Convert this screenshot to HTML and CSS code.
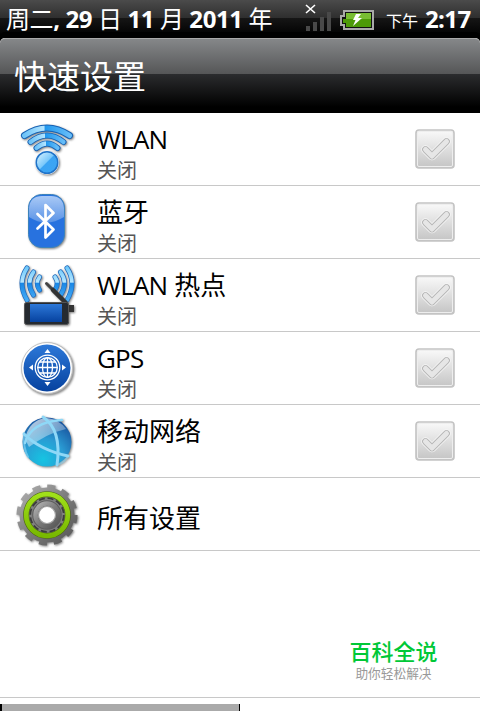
FILE: index.html
```
<!DOCTYPE html>
<html lang="zh-CN">
<head>
<meta charset="UTF-8">
<meta name="viewport" content="width=device-width, initial-scale=1.0">
<title>快速设置</title>
<link rel="stylesheet" href="styles.css">
</head>
<body>
<svg class="defs" width="0" height="0">
    <defs>
        <linearGradient id="check" x1="0" y1="0" x2="0" y2="1">
            <stop offset="0" stop-color="#fafafa"/>
            <stop offset="1" stop-color="#c4c4c4"/>
        </linearGradient>
        <linearGradient id="wave" x1="0" y1="0" x2="1" y2="0">
            <stop offset="0" stop-color="#6fc4f8"/>
            <stop offset=".44" stop-color="#b4e5ff"/>
            <stop offset=".45" stop-color="#1f97ee"/>
            <stop offset="1" stop-color="#66bdf8"/>
        </linearGradient>
        <linearGradient id="antenna" gradientUnits="userSpaceOnUse" x1="0" y1="6" x2="0" y2="42">
            <stop offset="0" stop-color="#64c4fa"/>
            <stop offset=".48" stop-color="#b6e7ff"/>
            <stop offset=".5" stop-color="#1987e6"/>
            <stop offset="1" stop-color="#49adf5"/>
        </linearGradient>
        <linearGradient id="ball" x1="0" y1="0" x2="1" y2="1">
            <stop offset="0" stop-color="#e2f6ff"/>
            <stop offset=".48" stop-color="#79c8fb"/>
            <stop offset=".5" stop-color="#3ba4f3"/>
            <stop offset="1" stop-color="#3da6f5"/>
        </linearGradient>
        <linearGradient id="blue" x1="0" y1="0" x2="0" y2="1">
            <stop offset="0" stop-color="#2d78d8"/>
            <stop offset="1" stop-color="#06429f"/>
        </linearGradient>
        <linearGradient id="gloss" x1="0" y1="0" x2="0" y2="1">
            <stop offset="0" stop-color="#a9c9f6"/>
            <stop offset="1" stop-color="#5a93e6"/>
        </linearGradient>
        <radialGradient id="globe" cx=".42" cy=".85" r=".85">
            <stop offset="0" stop-color="#16c4e2"/>
            <stop offset=".5" stop-color="#2a9bd3"/>
            <stop offset="1" stop-color="#19539e"/>
        </radialGradient>
        <linearGradient id="shine" x1="0" y1="0" x2="1" y2="1">
            <stop offset="0" stop-color="#fff" stop-opacity=".75"/>
            <stop offset="1" stop-color="#fff" stop-opacity=".1"/>
        </linearGradient>
        <linearGradient id="metal" x1="0" y1="0" x2="1" y2="1">
            <stop offset="0" stop-color="#b2b2b2"/>
            <stop offset=".5" stop-color="#7c7c7c"/>
            <stop offset="1" stop-color="#555"/>
        </linearGradient>
        <linearGradient id="lime" x1="0" y1="0" x2="0" y2="1">
            <stop offset="0" stop-color="#a0e01a"/>
            <stop offset="1" stop-color="#78b800"/>
        </linearGradient>
        <symbol id="checkbox" viewBox="0 0 40 40">
            <rect x="1" y="1" width="38" height="38" rx="3" fill="url(#check)" stroke="#c3c3c3" stroke-width="1.600"/>
            <rect x="2.500" y="2.500" width="35" height="35" rx="1.500" fill="none" stroke="#eee"/>
            <path d="M10.500 20.500 17 27 31.500 12.500" fill="none" stroke="#f6f6f6" stroke-width="8.500" stroke-linecap="round" stroke-linejoin="round"/>
            <path d="M10.500 20.500 17 27 31.500 12.500" fill="none" stroke="#b5b5b5" stroke-width="6.800" stroke-linecap="round" stroke-linejoin="round"/>
            <path d="M10.500 20.500 17 27 31.500 12.500" fill="none" stroke="#e6e6e6" stroke-width="5" stroke-linecap="round" stroke-linejoin="round"/>
        </symbol>
    </defs>
</svg>

<div class="statusbar">
    <div class="date">周二<b>, 29 </b>日<b> 11 </b>月<b> 2011 </b>年</div>
    <svg class="signal" width="28" height="30" viewBox="0 0 28 30">
        <path d="M1 1l9 8M10 1 1 9" stroke="#fff" stroke-width="1.600"/>
        <path d="M1 22h4v5H1zM8 18h4v9H8zM15 13h4v14h-4zM22 8h4v19h-4z" fill="#494949"/>
    </svg>
    <svg class="battery" width="34" height="20" viewBox="0 0 34 20">
        <path d="M4 1h29v18H4v-4H1V6h3z" fill="#111" stroke="#a9a9a9" stroke-width="2"/>
        <path d="M6 3h25v14H6v-4H3V9h3z" fill="#4d9a08"/>
        <path d="M6 3h25v6H6z" fill="#78bd32"/>
        <path d="M16 4h5l-3 4h4l-9 8 2.500-6H13z" fill="#fff"/>
    </svg>
    <div class="ampm">下午</div>
    <div class="clock">2:17</div>
</div>

<h1 class="titlebar">快速设置</h1>

<ul class="settings">
    <li class="row">
        <svg class="icon" width="98" height="72" viewBox="0 0 98 72">
            <g fill="none" stroke-linecap="round">
                <path d="M24.500 22.500Q47 7.500 69.500 22.500" stroke="#1762b4" stroke-width="7" stroke-linejoin="round"/>
                <path d="M24.500 22.500Q47 7.500 69.500 22.500" stroke="url(#wave)" stroke-width="5"/>
                <path d="M30.500 29Q47 16 63.500 29" stroke="#1762b4" stroke-width="6"/>
                <path d="M30.500 29Q47 16 63.500 29" stroke="url(#wave)" stroke-width="4.200"/>
                <path d="M36.500 35Q47 26 57.500 35" stroke="#1762b4" stroke-width="6"/>
                <path d="M36.500 35Q47 26 57.500 35" stroke="url(#wave)" stroke-width="4.200"/>
            </g>
            <circle cx="47" cy="49.500" r="12" fill="#fff"/>
            <circle cx="47" cy="49.500" r="10.800" fill="url(#ball)" stroke="#2173c8" stroke-width="1.500"/>
        </svg>
        <div class="text">
            <div class="name"><span class="latin">WLAN</span></div>
            <div class="state">关闭</div>
        </div>
        <svg class="check" width="40" height="40"><use href="#checkbox"/></svg>
    </li>
    <li class="row">
        <svg class="icon" width="98" height="72" viewBox="0 0 98 72">
            <rect x="28.500" y="8.500" width="36" height="53" rx="13" fill="#2872df" stroke="#3c83bb"/>
            <path d="M29 31V22Q30 10 42 10h9q12 0 13 12v9Q46 42 29 31z" fill="url(#gloss)"/>
            <path d="M37.500 28 53.500 43.500 45.500 51.500V19l8 8L37.500 42.500" fill="none" stroke="#fff" stroke-width="2.700" stroke-linejoin="round" stroke-linecap="round"/>
        </svg>
        <div class="text">
            <div class="name">蓝牙</div>
            <div class="state">关闭</div>
        </div>
        <svg class="check" width="40" height="40"><use href="#checkbox"/></svg>
    </li>
    <li class="row">
        <svg class="icon" width="98" height="72" viewBox="0 0 98 72">
            <g fill="none" stroke="#1c68bd" stroke-width="5" stroke-linecap="round">
                <path d="M27 9Q17 24 27 41M33.500 13Q25.500 24 33.500 36M39.500 18Q35 24 39.500 31M67 9Q77 24 67 41M60.500 13Q68.500 24 60.500 36M55 18Q59.500 24 55 31"/>
                <path d="M27 9Q17 24 27 41M33.500 13Q25.500 24 33.500 36M39.500 18Q35 24 39.500 31M67 9Q77 24 67 41M60.500 13Q68.500 24 60.500 36M55 18Q59.500 24 55 31" stroke="url(#antenna)" stroke-width="3.700"/>
            </g>
            <path d="m46.500 24.500 8 8" stroke="#444" stroke-width="3" stroke-linecap="round"/>
            <path d="m53 31 13 13" stroke="#333" stroke-width="4.500" stroke-linecap="round"/>
            <path d="m63 42 5 4h6v7h-5v11h-6z" fill="#333"/>
            <rect x="24.500" y="43.500" width="44" height="22" rx="2" fill="#252a30" stroke="#555"/>
            <rect x="30" y="45" width="32" height="18" fill="url(#blue)"/>
        </svg>
        <div class="text">
            <div class="name"><span class="latin">WLAN</span> 热点</div>
            <div class="state">关闭</div>
        </div>
        <svg class="check" width="40" height="40"><use href="#checkbox"/></svg>
    </li>
    <li class="row">
        <svg class="icon" width="98" height="72" viewBox="0 0 98 72">
            <circle cx="47.500" cy="36.500" r="26" fill="#aaa"/>
            <circle cx="47" cy="36" r="25.500" fill="#fff" stroke="#bbb" stroke-width=".8"/>
            <circle cx="47" cy="36" r="23.500" fill="url(#blue)"/>
            <g fill="none" stroke="#fff" stroke-width="1.300">
                <circle cx="47.500" cy="35.500" r="12.300"/>
                <circle cx="47.500" cy="35.500" r="9.800"/>
                <ellipse cx="47.500" cy="35.500" rx="5" ry="9.800"/>
                <path d="M47.500 25.500v20M37.500 35.500h20M39.500 30h16M39.500 41h16"/>
            </g>
            <path d="M47.500 17l3 4h-6zM47.500 54l3-4h-6zM29 35.500l4-3v6zM66 35.500l-4-3v6z" fill="#fff"/>
        </svg>
        <div class="text">
            <div class="name"><span class="latin">GPS</span></div>
            <div class="state">关闭</div>
        </div>
        <svg class="check" width="40" height="40"><use href="#checkbox"/></svg>
    </li>
    <li class="row">
        <svg class="icon" width="98" height="72" viewBox="0 0 98 72">
            <circle cx="47" cy="37" r="24.500" fill="url(#globe)"/>
            <path d="M25 34Q29 15 46 13q13 1 20 11Q48 28 29 42z" fill="url(#shine)"/>
            <g fill="none" stroke="#8fd8f7" stroke-width="3" stroke-linecap="round">
                <path d="M43 12Q62 25 57 60"/>
                <path d="M24 29Q40 45 68 51"/>
                <path d="M25 38Q31 17 62 15" stroke-width="2.500"/>
                <path d="M24 28Q23 43 28 52M57 60Q65 57 68 51" stroke-width="2" opacity=".6"/>
            </g>
        </svg>
        <div class="text">
            <div class="name">移动网络</div>
            <div class="state">关闭</div>
        </div>
        <svg class="check" width="40" height="40"><use href="#checkbox"/></svg>
    </li>
    <li class="row">
        <svg class="icon" width="98" height="72" viewBox="0 0 98 72">
            <circle cx="47" cy="37" r="27.500" fill="url(#metal)"/>
            <circle cx="47" cy="37" r="28.300" fill="none" stroke="url(#metal)" stroke-width="4.500" stroke-dasharray="8 6.820"/>
            <circle cx="47" cy="37" r="20.800" fill="#808080" stroke="#4a6410" stroke-width="6"/>
            <circle cx="47" cy="37" r="20.800" fill="none" stroke="url(#lime)" stroke-width="4.800"/>
            <circle cx="47" cy="37" r="16.800" fill="none" stroke="#3c3c3c" stroke-width="1.800" stroke-dasharray="6 2.800"/>
            <circle cx="47" cy="37" r="11.800" fill="none" stroke="#5d5d5d" stroke-width="6"/>
            <circle cx="47" cy="37" r="11.500" fill="none" stroke="url(#metal)" stroke-width="4.500"/>
            <circle cx="47" cy="37" r="8.500" fill="#fff" stroke="#a3a3a3" stroke-width="1.200"/>
        </svg>
        <div class="text">
            <div class="name">所有设置</div>
        </div>
    </li>
</ul>

<div class="brand">
    <div class="brand-name">百科全说</div>
    <div class="brand-slogan">助你轻松解决</div>
</div>
<div class="footer"><div class="handle"></div></div>
</body>
</html>
```
FILE: styles.css
```
* {
    box-sizing: border-box;
}
body {
    margin: 0;
    width: 480px;
    height: 711px;
    overflow: hidden;
    display: flex;
    flex-direction: column;
    background: #fff;
    font-family: "Open Sans", "Noto Sans CJK SC", sans-serif;
}
.defs {
    display: block;
    flex: none;
}
.statusbar {
    display: flex;
    align-items: flex-start;
    height: 38px;
    flex: none;
    padding-left: 6px;
    background: linear-gradient(#4b4b4b, #2e2e2e 18px, #161616 18px, #000 36px);
    color: #fff;
    white-space: pre;
}
.date {
    width: 299px;
    font-size: 24px;
    letter-spacing: -0.4px;
    line-height: 38px;
}
.signal {
    margin-top: 4px;
}
.battery {
    margin: 10px 0 0 7px;
}
.ampm {
    margin-left: 12px;
    width: 39px;
    font-size: 16px;
    line-height: 43px;
}
.clock {
    font-size: 24px;
    font-weight: bold;
    letter-spacing: -0.6px;
    line-height: 38px;
}
.titlebar {
    margin: 0;
    height: 75px;
    flex: none;
    padding-left: 14px;
    border-top: 1px solid #aaa;
    border-radius: 5px 5px 0 0;
    background: linear-gradient(#858789, #555657 35px, #2b2c2e 35px, #000 68px);
    box-shadow: 0 -6px 0 #000;
    color: #fff;
    font-size: 33px;
    font-weight: normal;
    line-height: 76px;
}
.settings {
    margin: 0;
    padding: 0;
    list-style: none;
}
.row {
    display: flex;
    align-items: center;
    height: 73px;
    border-bottom: 1px solid #c8c8c8;
}
.icon {
    flex: none;
    margin-right: -1px;
    filter: drop-shadow(1px 1px 1px rgba(0,0,0,0.5));
}
.text {
    flex: 1;
    padding-top: 8px;
}
.name {
    color: #000;
    font-size: 26px;
    line-height: 34px;
}
.latin {
    letter-spacing: -0.8px;
}
.state {
    color: #555;
    font-size: 20px;
    line-height: 29px;
}
.check {
    margin-right: 25px;
}
.brand {
    height: 147px;
    flex: none;
    padding: 84px 0 0 308px;
    border-bottom: 1px solid #c8c8c8;
    text-align: center;
}
.brand-name {
    margin-left: -1px;
    color: #00c837;
    font-size: 22px;
    font-weight: 500;
    line-height: 32px;
}
.brand-slogan {
    margin-left: -1px;
    color: #999;
    font-size: 12.700px;
    line-height: 12px;
}
.footer {
    padding-top: 6px;
}
.handle {
    width: 240px;
    height: 8px;
    border-left: 2px solid #000;
    border-right: 1px solid #000;
    background: #aaa;
}
```
